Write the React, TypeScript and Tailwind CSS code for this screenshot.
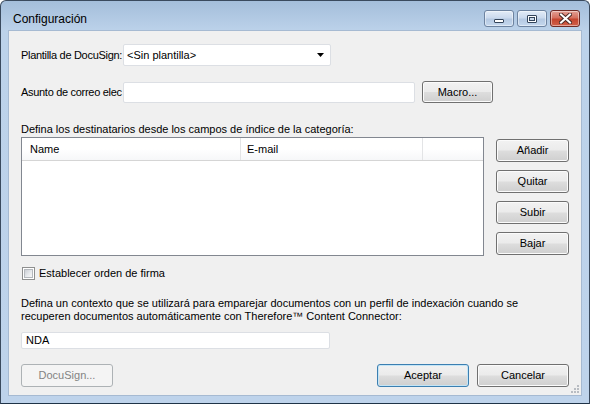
import React from "react";

const font = { fontFamily: '"Liberation Sans", Arial, sans-serif' };

function WinButton({
  children,
  className = "",
  focused = false,
  disabled = false,
}: {
  children: React.ReactNode;
  className?: string;
  focused?: boolean;
  disabled?: boolean;
}) {
  if (disabled) {
    return (
      <div
        className={`flex items-center justify-center rounded-[3px] border border-[#adb2b5] bg-[#f4f4f4] text-[#838383] ${className}`}
      >
        {children}
      </div>
    );
  }
  return (
    <div
      className={`flex items-center justify-center rounded-[3px] border ${
        focused
          ? "border-[#3c7fb1] shadow-[inset_0_0_0_1px_#c4e5f6]"
          : "border-[#707070] shadow-[inset_0_0_0_1px_#fbfbfb]"
      } bg-[linear-gradient(to_bottom,#f2f2f2_0%,#ebebeb_48%,#dddddd_52%,#cfcfcf_100%)] text-black ${className}`}
    >
      {children}
    </div>
  );
}

function CaptionButton({ kind }: { kind: "min" | "max" | "close" }) {
  const isClose = kind === "close";
  return (
    <div
      className={`flex h-[17px] w-[30px] items-center justify-center rounded-[3px] border ${
        isClose
          ? "border-[#6e2a25] bg-[linear-gradient(to_bottom,#e3a095_0%,#d5705f_45%,#c4452f_55%,#d1604a_100%)]"
          : "border-[#6d83a0] bg-[linear-gradient(to_bottom,#e3ecf7_0%,#cbdaee_45%,#b5c9e2_55%,#c5d8ee_100%)]"
      } shadow-[inset_0_0_0_1px_rgba(255,255,255,0.45)]`}
    >
      {kind === "min" && (
        <div className="mt-[5px] h-[4px] w-[10px] rounded-[1px] border border-[#33445a] bg-white" />
      )}
      {kind === "max" && (
        <div className="h-[8px] w-[10px] rounded-[1px] border border-[#33445a] bg-white p-[1px]">
          <div className="h-full w-full border border-[#33445a] bg-[#c9d8ea]" />
        </div>
      )}
      {kind === "close" && (
        <svg width="13" height="11" viewBox="0 0 13 11">
          <path
            d="M2 1.5 L11 9.5 M11 1.5 L2 9.5"
            stroke="#4b2a26"
            strokeWidth="4"
            strokeLinecap="square"
          />
          <path
            d="M2 1.5 L11 9.5 M11 1.5 L2 9.5"
            stroke="#ffffff"
            strokeWidth="2"
            strokeLinecap="square"
          />
        </svg>
      )}
    </div>
  );
}

export default function App() {
  return (
    <div
      className="h-[404px] w-[590px] overflow-hidden bg-white text-[11px] leading-[13px] text-black"
      style={font}
    >
      <div className="flex h-[404px] w-[590px] flex-col rounded-t-[6px] border border-[#3a4a5e] border-b-[#1f3347] bg-[linear-gradient(to_bottom,#a4bedb_0px,#bcd2ea_30px,#bed3eb_100%)] px-[7px] pb-[7px]">
        {/* title bar */}
        <div className="flex h-[29px] shrink-0 items-start">
          <div className="pl-[5px] pt-[11px] text-[12px] leading-[14px] text-black">
            Configuración
          </div>
          <div className="ml-auto flex gap-[3px] pr-[2px] pt-[9px]">
            <CaptionButton kind="min" />
            <CaptionButton kind="max" />
            <CaptionButton kind="close" />
          </div>
        </div>

        {/* client area */}
        <div className="relative flex flex-1 flex-col border border-[#a6bad2] bg-[#f0f0f0] pl-[12px] pr-[12px] pt-[13px]">
          {/* plantilla */}
          <div className="flex h-[22px] items-center">
            <div className="w-[102px] whitespace-nowrap tracking-[-0.3px]">Plantilla de DocuSign:</div>
            <div className="flex h-[22px] w-[208px] items-center rounded-[2px] border border-[#dcdfe4] bg-white pl-[3px] pr-[6px]">
              <span>&lt;Sin plantilla&gt;</span>
              <svg className="ml-auto" width="7" height="4" viewBox="0 0 7 4">
                <path d="M0 0 H7 L3.5 4 Z" fill="#000" />
              </svg>
            </div>
          </div>

          {/* asunto */}
          <div className="mt-[15px] flex h-[22px] items-center">
            <div className="w-[102px] whitespace-nowrap tracking-[-0.3px]">Asunto de correo elec</div>
            <div className="h-[21px] w-[292px] rounded-[2px] border border-[#dcdfe4] bg-white" />
            <WinButton className="ml-[7px] h-[22px] w-[71px]">Macro...</WinButton>
          </div>

          <div className="mt-[20px] whitespace-nowrap">
            Defina los destinatarios desde los campos de índice de la categoría:
          </div>

          {/* list + buttons */}
          <div className="mt-[1px] flex">
            <div className="flex h-[119px] w-[464px] flex-col border border-[#828790] bg-white">
              <div className="flex h-[23px] border-b border-[#d5d5d5] bg-[linear-gradient(to_bottom,#ffffff_0%,#ffffff_50%,#f6f7f9_100%)]">
                <div className="flex w-[219px] items-center border-r border-[#e3e4e6] pl-[8px]">
                  Name
                </div>
                <div className="flex w-[182px] items-center border-r border-[#e3e4e6] pl-[6px]">
                  E-mail
                </div>
                <div className="flex-1" />
              </div>
            </div>
            <div className="ml-[12px] flex w-[73px] flex-col gap-[8px] pt-[2px]">
              <WinButton className="h-[23px]">Añadir</WinButton>
              <WinButton className="h-[23px]">Quitar</WinButton>
              <WinButton className="h-[23px]">Subir</WinButton>
              <WinButton className="h-[23px]">Bajar</WinButton>
            </div>
          </div>

          {/* checkbox */}
          <div className="mt-[11px] flex h-[13px] items-center">
            <div className="ml-[1px] flex h-[13px] w-[13px] items-center justify-center border border-[#8e8f8f] bg-white">
              <div className="h-[9px] w-[9px] border border-[#b4b8bd] bg-[linear-gradient(135deg,#cbcfd5_0%,#e9ebee_60%,#f6f6f6_100%)]" />
            </div>
            <span className="ml-[4px] whitespace-nowrap">Establecer orden de firma</span>
          </div>

          {/* context text */}
          <div className="mt-[17px] flex flex-col">
            <span className="whitespace-nowrap">
              Defina un contexto que se utilizará para emparejar documentos con un perfil de indexación cuando se
            </span>
            <span className="whitespace-nowrap">
              recuperen documentos automáticamente con Therefore™ Content Connector:
            </span>
          </div>

          <div className="mt-[9px] flex h-[17px] w-[309px] items-center rounded-[2px] border border-[#dcdfe4] bg-white pl-[4px]">
            NDA
          </div>

          {/* bottom buttons */}
          <div className="mt-[15px] flex">
            <WinButton disabled className="h-[23px] w-[92px]">
              DocuSign...
            </WinButton>
            <WinButton focused className="ml-auto h-[23px] w-[92px]">
              Aceptar
            </WinButton>
            <WinButton className="ml-[8px] h-[23px] w-[92px]">Cancelar</WinButton>
          </div>

          {/* size grip */}
          <svg className="absolute bottom-[1px] right-[1px]" width="10" height="10" viewBox="0 0 10 10">
            {[
              [7, 1],
              [4, 4],
              [7, 4],
              [1, 7],
              [4, 7],
              [7, 7],
            ].map(([x, y], i) => (
              <rect key={i} x={x} y={y} width="2" height="2" fill="#b8bcc2" />
            ))}
          </svg>
        </div>
      </div>
    </div>
  );
}
